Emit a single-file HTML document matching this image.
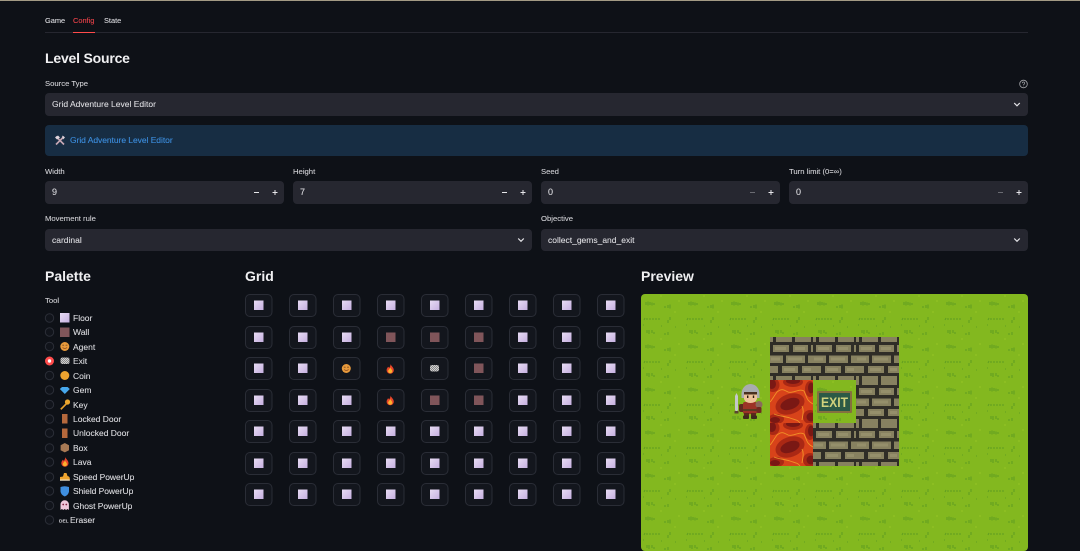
<!DOCTYPE html>
<html><head><meta charset="utf-8"><style>
html,body{margin:0;padding:0;background:#0e1117;width:1080px;height:551px;overflow:hidden}
body{position:relative;font-family:"Liberation Sans",sans-serif;color:#dedee2}
#w{position:absolute;left:0;top:0;width:1080px;height:551px;filter:blur(.3px)}
.t{position:absolute;white-space:nowrap;line-height:12px;height:12px;font-size:8.5px;-webkit-text-stroke:.08px currentColor}
.l{color:#d4d4d8;font-size:7.7px}
.n{font-size:9px}
.tb{font-size:7.4px}
.h{font-weight:700;font-size:14px;line-height:18px;height:18px;color:#f0f0f2;-webkit-text-stroke:0}
.b{position:absolute;background:#262730;border-radius:4px}
</style></head><body><div id="w">
<div style="position:absolute;left:0;top:0;width:1080px;height:1px;background:#a39a84"></div>
<div style="position:absolute;left:45px;top:32px;width:983px;height:1px;background:#262730"></div>
<div style="position:absolute;left:73px;top:32px;width:22px;height:1px;background:#ff4b4b"></div>
<div class="t tb" style="left:45px;top:15px">Game</div>
<div class="t tb" style="left:73px;top:15px;color:#f0444a">Config</div>
<div class="t tb" style="left:104px;top:15px">State</div>
<div class="t h" style="left:45px;top:49px;letter-spacing:-.2px">Level Source</div>
<div class="t l" style="left:45px;top:78px">Source Type</div>
<div class="b" style="left:45px;top:93px;width:983px;height:22.5px"></div>
<div class="t" style="left:52px;top:98px">Grid Adventure Level Editor</div>
<div class="b" style="left:45px;top:125px;width:983px;height:31px;background:#172d43"></div>
<div class="t" style="left:70px;top:134px;color:#3d8fe0;letter-spacing:-.05px">Grid Adventure Level Editor</div>
<div class="t l" style="left:45px;top:166px">Width</div>
<div class="t l" style="left:293px;top:166px">Height</div>
<div class="t l" style="left:541px;top:166px">Seed</div>
<div class="t l" style="left:789px;top:166px">Turn limit (0=∞)</div>
<div class="b" style="left:45px;top:181px;width:239px;height:22.5px"></div>
<div class="b" style="left:293px;top:181px;width:239px;height:22.5px"></div>
<div class="b" style="left:541px;top:181px;width:239px;height:22.5px"></div>
<div class="b" style="left:789px;top:181px;width:239px;height:22.5px"></div>
<div class="t n" style="left:52px;top:185.500px">9</div>
<div class="t n" style="left:300px;top:185.500px">7</div>
<div class="t n" style="left:548px;top:185.500px">0</div>
<div class="t n" style="left:796px;top:185.500px">0</div>
<div class="t l" style="left:45px;top:213px">Movement rule</div>
<div class="t l" style="left:541px;top:213px">Objective</div>
<div class="b" style="left:45px;top:228.5px;width:487px;height:22.5px"></div>
<div class="b" style="left:541px;top:228.5px;width:487px;height:22.5px"></div>
<div class="t" style="left:52px;top:233.500px">cardinal</div>
<div class="t" style="left:548px;top:233.500px">collect_gems_and_exit</div>
<div class="t h" style="left:45px;top:267px">Palette</div>
<div class="t h" style="left:245px;top:267px">Grid</div>
<div class="t h" style="left:641px;top:267px">Preview</div>
<div class="t l" style="left:45px;top:295px">Tool</div>
<div class="t" style="left:73px;top:312px">Floor</div>
<div class="t" style="left:73px;top:326px">Wall</div>
<div class="t" style="left:73px;top:341px">Agent</div>
<div class="t" style="left:73px;top:355px">Exit</div>
<div class="t" style="left:73px;top:370px">Coin</div>
<div class="t" style="left:73px;top:384px">Gem</div>
<div class="t" style="left:73px;top:399px">Key</div>
<div class="t" style="left:73px;top:413px">Locked Door</div>
<div class="t" style="left:73px;top:427px">Unlocked Door</div>
<div class="t" style="left:73px;top:442px">Box</div>
<div class="t" style="left:73px;top:456px">Lava</div>
<div class="t" style="left:73px;top:471px;letter-spacing:-.05px">Speed PowerUp</div>
<div class="t" style="left:73px;top:485px;letter-spacing:-.05px">Shield PowerUp</div>
<div class="t" style="left:73px;top:500px;letter-spacing:-.05px">Ghost PowerUp</div>
<div class="t" style="left:70px;top:514px">Eraser</div>

<svg width="1080" height="551" viewBox="0 0 1080 551" style="position:absolute;left:0;top:0">
<defs>
<linearGradient id="fl" x1="0" y1="0" x2="1" y2="1"><stop offset="0" stop-color="#e8dcf4"/><stop offset="1" stop-color="#c6b0e0"/></linearGradient>
<symbol id="cell" overflow="visible"><rect x=".5" y=".5" width="26.5" height="22" rx="4.500" fill="#13161d" stroke="#2a2d36"/></symbol>
<g id="F"><use href="#cell"/><rect x="9" y="6.500" width="9.500" height="9.500" fill="url(#fl)"/></g>
<g id="W"><use href="#cell"/><rect x="9" y="6.500" width="9.500" height="9.500" fill="#80555a"/></g>
<g id="fire"><path d="M4.500 0C5 2 7.800 3.200 7.800 6.200A3.600 3.600 0 0 1 .6 6.200C.6 4.500 1.700 3.800 2 2.800C2.800 3.300 3 3.700 3.200 4C3.800 2.800 4.700 1.500 4.500 0Z" fill="#e8452a"/><path d="M4.300 3.500C4.700 4.800 6.300 5.800 6.300 7.200A2.100 2.100 0 0 1 2.100 7.200C2.100 6 3.800 5 4.300 3.500Z" fill="#fbb02c"/></g>
<g id="smile"><circle cx="4.500" cy="4.500" r="4.500" fill="#e89a3c"/><path d="M2 3.200h1.800M5.300 3.200h1.800" stroke="#7a4a20" stroke-width=".8"/><path d="M2.300 5.500Q4.500 7.500 6.800 5.500" stroke="#8a4a20" fill="none" stroke-width=".8"/></g>
<pattern id="chk" width="2" height="2" patternUnits="userSpaceOnUse"><rect width="2" height="2" fill="#cfcfcf"/><rect width="1" height="1" fill="#888"/><rect x="1" y="1" width="1" height="1" fill="#888"/></pattern>
<pattern id="grass" x="641" y="294" width="43" height="43" patternUnits="userSpaceOnUse">
<rect width="43" height="43" fill="#83b81f"/>
<path d="M5 11v-3M7 11.500v-4M9 11v-3M11 11.500v-3M13 11v-2M24 14v-2M27 14v-3M29 14.500v-4M3 26l1-2M6 26v-2M9 26v-2M12 26v-2M15 26v-2M18 26v-2M27 29v-3M29 26v-3M6 39v-3M8 40v-4M11 39v-3M13 40v-2M24 41v-2M27 41v-3M2 31h1M20 32h1M34 33h1" stroke="#5c9a20" stroke-width="1.100" fill="none" opacity=".85"/>
<path d="M20 3v-2M34 19v-2M38 8v-2" stroke="#9cc828" stroke-width="1" opacity=".7"/>
</pattern>
<pattern id="brick" x="770" y="337" width="43" height="43" patternUnits="userSpaceOnUse">
<rect width="43" height="43" fill="#2f2d27"/>
<g fill="#878160">
<rect x="0" y="0" width="3" height="5"/><rect x="6" y="0" width="16" height="5"/><rect x="25" y="0" width="16" height="5"/>
<rect x="3" y="8" width="16" height="7"/><rect x="23" y="8" width="15" height="7"/><rect x="41" y="8" width="2" height="7"/>
<rect x="0" y="18.500" width="13" height="7.500"/><rect x="16" y="18.500" width="19" height="7.500"/><rect x="38" y="18.500" width="5" height="7.500"/>
<rect x="0" y="29" width="8" height="7"/><rect x="12" y="29" width="16" height="7"/><rect x="32" y="29" width="11" height="7"/>
<rect x="0" y="39" width="3" height="4"/><rect x="6" y="39" width="16" height="4"/><rect x="25" y="39" width="16" height="4"/>
</g>
<g fill="#a09a74" opacity=".55"><rect x="5" y="10" width="11" height="3"/><rect x="25" y="10" width="10" height="3"/><rect x="18" y="20.500" width="14" height="3"/><rect x="14" y="31" width="11" height="3"/><rect x="34" y="31" width="7" height="3"/><rect x="1" y="20.500" width="9" height="3"/></g>
</pattern>
<pattern id="lava" x="770" y="380" width="43" height="43" patternUnits="userSpaceOnUse">
<rect width="43" height="43" fill="#d8431a"/>
<g fill="#aa2814">
<ellipse cx="3" cy="5" rx="6.500" ry="7"/><ellipse cx="23" cy="2" rx="10" ry="5"/><ellipse cx="40" cy="9" rx="5" ry="8"/>
<ellipse cx="20" cy="24" rx="15" ry="10" transform="rotate(-20 20 24)"/><ellipse cx="40" cy="37" rx="7" ry="7"/><ellipse cx="6" cy="39" rx="8" ry="5"/>
</g>
<g fill="#7a1814">
<ellipse cx="2" cy="4" rx="4" ry="5"/><ellipse cx="23" cy="1" rx="7" ry="3"/><ellipse cx="41" cy="8" rx="3" ry="5.500"/>
<ellipse cx="20" cy="24" rx="10" ry="5.500" transform="rotate(-20 20 24)"/><ellipse cx="41" cy="37" rx="4.500" ry="4.500"/><ellipse cx="5" cy="40" rx="5" ry="3"/>
</g>
<path d="M7 12C12 8 14 10 18 12S30 8 34 11M7 12C4 16 2 20 0 22M34 11C37 17 36 20 43 24M4 34C8 36 14 36 20 38S28 40 30 43M32 26C34 30 33 34 32 40" stroke="#f7a52a" stroke-width=".9" fill="none" opacity=".8"/>
</pattern>
<clipPath id="pv"><rect x="641" y="294" width="387" height="257" rx="4"/></clipPath>
</defs>

<circle cx="1023.500" cy="84" r="3.800" fill="none" stroke="#a5a6ab" stroke-width=".8"/>
<path d="M1022.300 83.200a1.200 1.200 0 1 1 1.700 1.100q-.5.300-.5.800M1023.500 85.700v.6" fill="none" stroke="#a5a6ab" stroke-width=".7"/>
<g fill="none" stroke="#e6e6ea" stroke-width="1.200"><path d="M1014.200 103l2.800 2.800 2.800-2.800"/><path d="M518.200 238.500l2.800 2.800 2.800-2.800"/><path d="M1014.200 238.500l2.800 2.800 2.800-2.800"/></g>
<g stroke="#e6e6ea" stroke-width="1"><path d="M254 192.500h5M272.500 192.500h5M275 190v5"/><path d="M502 192.500h5M520.500 192.500h5M523 190v5"/><path d="M768.500 192.500h5M771 190v5"/><path d="M1016.500 192.500h5M1019 190v5"/></g>
<path d="M750 192.500h5M998 192.500h5" stroke="#6a6b72" stroke-width="1"/>
<g transform="translate(55 135.500)"><path d="M1 1l8 8M9 1l-8 8" stroke="#c6a8b4" stroke-width="1.600"/><path d="M0 2l3-2 2 2-3 2zM7 0l3 2-2 2z" fill="#e0d6de"/></g>

<g fill="#11141b" stroke="#2b2e37" stroke-width="1">
<circle cx="49.500" cy="318" r="4.200"/><circle cx="49.500" cy="332" r="4.200"/><circle cx="49.500" cy="346.500" r="4.200"/><circle cx="49.500" cy="375.500" r="4.200"/><circle cx="49.500" cy="390" r="4.200"/><circle cx="49.500" cy="404.500" r="4.200"/><circle cx="49.500" cy="419" r="4.200"/><circle cx="49.500" cy="433" r="4.200"/><circle cx="49.500" cy="448" r="4.200"/><circle cx="49.500" cy="462" r="4.200"/><circle cx="49.500" cy="477" r="4.200"/><circle cx="49.500" cy="491" r="4.200"/><circle cx="49.500" cy="505.500" r="4.200"/><circle cx="49.500" cy="520" r="4.200"/>
</g>
<circle cx="49.500" cy="361" r="4.500" fill="#ff4b4b"/><circle cx="49.500" cy="361" r="1.700" fill="#fff"/>
<rect x="60" y="313" width="9.500" height="9.500" fill="url(#fl)"/>
<rect x="60" y="327.500" width="9.500" height="9.500" fill="#80555a"/>
<use href="#smile" x="60.300" y="342"/>
<rect x="60.500" y="357.500" width="9" height="6.500" rx="2" fill="url(#chk)"/>
<circle cx="64.800" cy="375.500" r="4.500" fill="#eda32f"/>
<path d="M62 387h5.600l2.200 2-5 5-5-5z" fill="#47a8ec"/>
<path d="M60.800 409.300l5.500-5.500" stroke="#e8a02c" stroke-width="1.700"/><circle cx="67.500" cy="402" r="2.600" fill="#eba62e"/>
<rect x="62" y="414" width="5.500" height="9.500" fill="#b5683c"/>
<rect x="62" y="428.500" width="5.500" height="9.500" fill="#b5683c"/>
<path d="M64.800 443l4.200 2.200v5l-4.200 2.200-4.200-2.200v-5z" fill="#a87a55"/>
<use href="#fire" x="60.700" y="457"/>
<path d="M60 480.500v-3.500l3-.5 1-3.500h2.500l1 3q2.300.5 2.300 2.500v2z" fill="#eda32f"/><rect x="60" y="479.500" width="9.800" height="1.200" fill="#f4e6c8"/>
<path d="M60.500 487q4-1.500 8.500 0v4.500q-.5 3.500-4.200 5-3.800-1.500-4.300-5z" fill="#3f8fe0"/>
<path d="M60.500 510v-5.500a4.200 4.200 0 0 1 8.400 0v5.500l-1.400-1-1.400 1-1.400-1-1.400 1-1.400-1z" fill="#f0c8dc"/>
<circle cx="63.200" cy="504.500" r=".9" fill="#802040"/><circle cx="66.300" cy="504.500" r=".9" fill="#802040"/>
<text x="59" y="522.500" font-family="Liberation Sans" font-size="4.800" font-weight="700" fill="#d8d8dc">DEL</text>

<use href="#F" x="245" y="294"/><use href="#F" x="289" y="294"/><use href="#F" x="333" y="294"/><use href="#F" x="377" y="294"/><use href="#F" x="421" y="294"/><use href="#F" x="465" y="294"/><use href="#F" x="509" y="294"/><use href="#F" x="553" y="294"/><use href="#F" x="597" y="294"/>
<use href="#F" x="245" y="326"/><use href="#F" x="289" y="326"/><use href="#F" x="333" y="326"/><use href="#W" x="377" y="326"/><use href="#W" x="421" y="326"/><use href="#W" x="465" y="326"/><use href="#F" x="509" y="326"/><use href="#F" x="553" y="326"/><use href="#F" x="597" y="326"/>
<use href="#F" x="245" y="357"/><use href="#F" x="289" y="357"/><use href="#cell" x="333" y="357"/><use href="#smile" x="341.800" y="364"/><use href="#cell" x="377" y="357"/><use href="#fire" x="386" y="364"/><use href="#cell" x="421" y="357"/><rect x="430" y="365" width="9" height="6.500" rx="2" fill="url(#chk)"/><use href="#W" x="465" y="357"/><use href="#F" x="509" y="357"/><use href="#F" x="553" y="357"/><use href="#F" x="597" y="357"/>
<use href="#F" x="245" y="389"/><use href="#F" x="289" y="389"/><use href="#F" x="333" y="389"/><use href="#cell" x="377" y="389"/><use href="#fire" x="386" y="395.500"/><use href="#W" x="421" y="389"/><use href="#W" x="465" y="389"/><use href="#F" x="509" y="389"/><use href="#F" x="553" y="389"/><use href="#F" x="597" y="389"/>
<use href="#F" x="245" y="420"/><use href="#F" x="289" y="420"/><use href="#F" x="333" y="420"/><use href="#F" x="377" y="420"/><use href="#F" x="421" y="420"/><use href="#F" x="465" y="420"/><use href="#F" x="509" y="420"/><use href="#F" x="553" y="420"/><use href="#F" x="597" y="420"/>
<use href="#F" x="245" y="452"/><use href="#F" x="289" y="452"/><use href="#F" x="333" y="452"/><use href="#F" x="377" y="452"/><use href="#F" x="421" y="452"/><use href="#F" x="465" y="452"/><use href="#F" x="509" y="452"/><use href="#F" x="553" y="452"/><use href="#F" x="597" y="452"/>
<use href="#F" x="245" y="483"/><use href="#F" x="289" y="483"/><use href="#F" x="333" y="483"/><use href="#F" x="377" y="483"/><use href="#F" x="421" y="483"/><use href="#F" x="465" y="483"/><use href="#F" x="509" y="483"/><use href="#F" x="553" y="483"/><use href="#F" x="597" y="483"/>

<g clip-path="url(#pv)">
<rect x="641" y="294" width="387" height="257" fill="url(#grass)"/>
<rect x="770" y="337" width="129" height="129" fill="url(#brick)"/>
<rect x="770" y="380" width="43" height="86" fill="url(#lava)"/>
<rect x="813" y="380" width="43" height="43" fill="url(#grass)"/>
<rect x="817" y="391" width="35" height="22" rx="1" fill="#85703f"/>
<rect x="819" y="393" width="31" height="18" fill="#2c5a46"/>
<text x="834.500" y="407" text-anchor="middle" font-family="Liberation Sans" font-weight="700" font-size="14" textLength="27" lengthAdjust="spacingAndGlyphs" fill="#d2d27c">EXIT</text>
<g transform="translate(730 380)">
<path d="M6.500 13l1.500 3v14l-1.500 2-1.500-2v-14z" fill="#c4c7cb"/>
<rect x="4.500" y="31" width="4" height="2.500" fill="#5a4630"/>
<rect x="9" y="24" width="6" height="8" rx="2" fill="#5e2a20"/>
<rect x="13" y="22" width="14" height="12" rx="2" fill="#9c3326"/>
<rect x="13" y="29" width="14" height="2" fill="#5b3a22"/>
<circle cx="29" cy="24.500" r="3.500" fill="#8a6a5c"/>
<rect x="26.500" y="27" width="5" height="6" rx="1.500" fill="#6e2a20"/>
<rect x="14" y="33" width="5" height="3" fill="#5a2a1c"/><rect x="21" y="33" width="5" height="3" fill="#5a2a1c"/>
<rect x="13" y="35.500" width="6" height="3.500" rx="1" fill="#3e2a1c"/><rect x="21" y="35.500" width="6" height="3.500" rx="1" fill="#3e2a1c"/>
<path d="M11.500 14a9 10 0 0 1 18 0v4h-2.500v-5H14v5h-2.500z" fill="#a9acb0"/>
<path d="M14 12h13v7q-1.500 4-6.500 4t-6.500-4z" fill="#eec39a"/>
<rect x="14" y="12" width="13" height="2.500" fill="#4a3020"/>
<rect x="17" y="15.500" width="1.400" height="2.500" fill="#2a1a10"/><rect x="22.800" y="15.500" width="1.400" height="2.500" fill="#2a1a10"/>
</g>
</g>
</svg>
</div></body></html>
